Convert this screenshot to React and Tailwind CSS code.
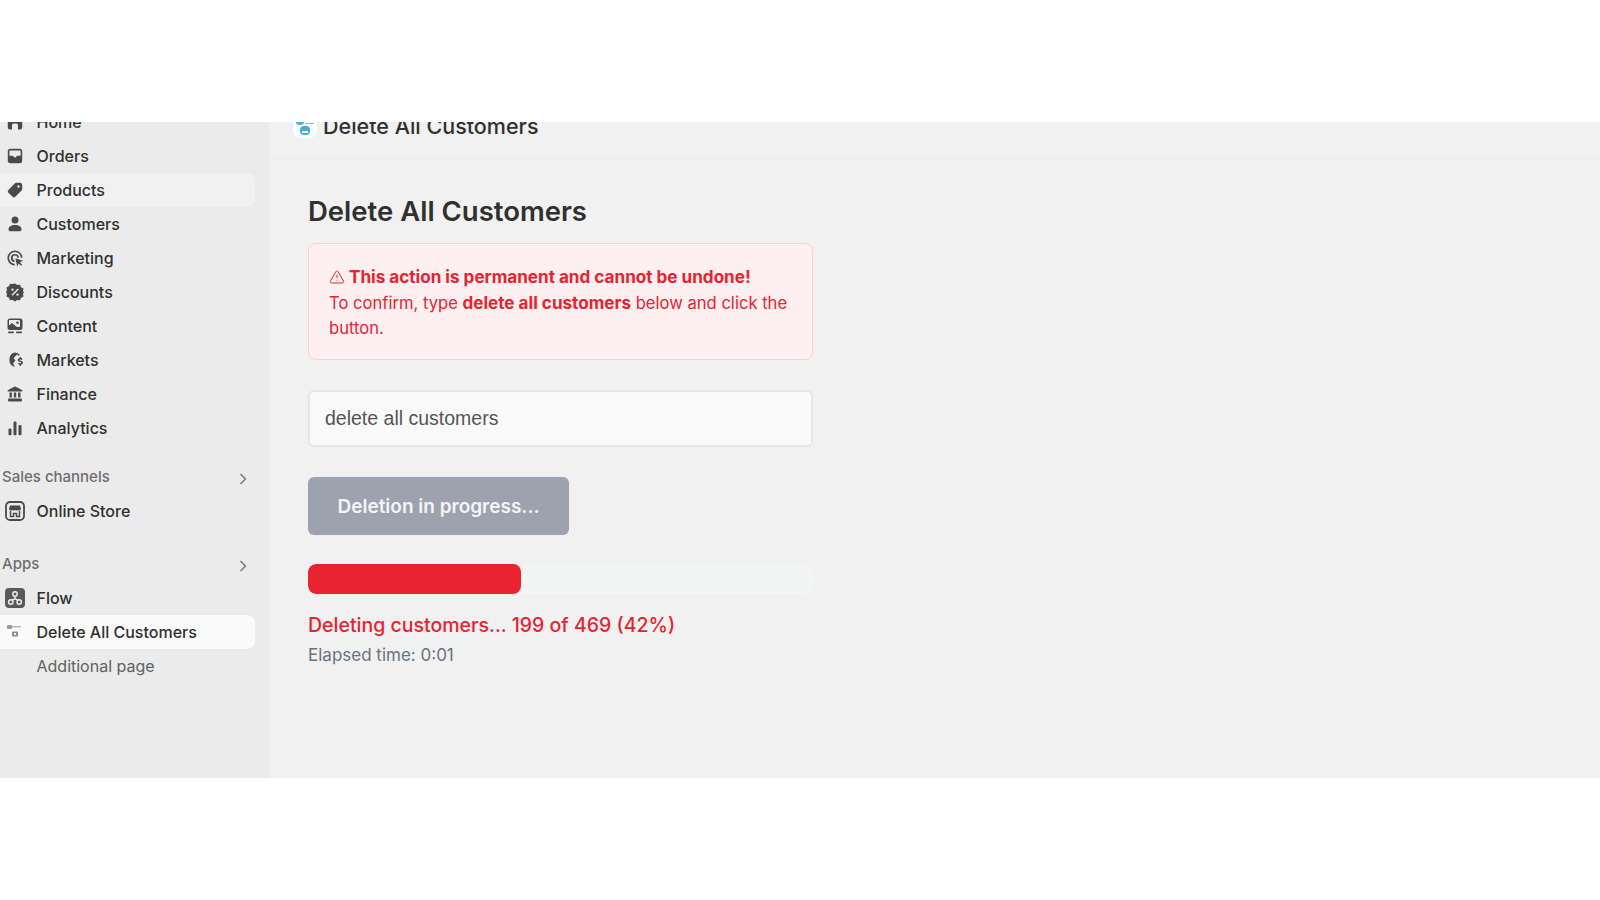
import { TriangleAlert } from 'lucide-react';

function Glyph({ children }) {
  return (
    <svg width="20" height="20" viewBox="0 0 20 20" fill="#4a4a4a" aria-hidden="true" className="shrink-0">
      {children}
    </svg>
  );
}

const HomeIcon = () => (
  <Glyph>
    <path d="M8.6 3.2a2.2 2.2 0 0 1 2.8 0l5 4a2 2 0 0 1 .8 1.600V15a2.500 2.500 0 0 1-2.500 2.500H13V13a1.500 1.500 0 0 0-1.500-1.500h-3A1.500 1.500 0 0 0 7 13v4.500H5.300A2.500 2.500 0 0 1 2.800 15V8.800a2 2 0 0 1 .8-1.600z" />
  </Glyph>
);

const OrdersIcon = () => (
  <Glyph>
    <path
      fillRule="evenodd"
      d="M5.500 2.800h9A2.700 2.700 0 0 1 17.200 5.500v9a2.700 2.700 0 0 1-2.700 2.700h-9a2.700 2.700 0 0 1-2.700-2.700v-9A2.700 2.700 0 0 1 5.500 2.800zM4.400 9.800h3.100c.5 0 .8.300 1 .7.300.7.900 1 1.500 1s1.200-.3 1.500-1c.2-.4.500-.7 1-.7h3.100V5.500c0-.6-.5-1.100-1.100-1.100h-9c-.6 0-1.100.5-1.100 1.100z"
    />
  </Glyph>
);

const ProductsIcon = () => (
  <Glyph>
    <path
      fillRule="evenodd"
      d="M11 2.800h4A2.200 2.200 0 0 1 17.200 5v4c0 .6-.2 1.100-.6 1.500l-6.300 6.300a2 2 0 0 1-2.800 0l-4.100-4.100a2 2 0 0 1 0-2.800l6.300-6.300c.4-.4.900-.8 1.300-.8zM13.500 5.300a1.200 1.200 0 1 0 0 2.400 1.200 1.200 0 0 0 0-2.400z"
    />
  </Glyph>
);

const CustomersIcon = () => (
  <Glyph>
    <circle cx="10" cy="6" r="3.500" />
    <path d="M3.500 15.500c0-2.800 2.500-4.500 6.500-4.500s6.500 1.700 6.500 4.500c0 1-.8 1.700-1.700 1.700H5.200c-.9 0-1.700-.7-1.700-1.700z" />
  </Glyph>
);

const MarketingIcon = () => (
  <Glyph>
    <path d="M10 2.500a7.500 7.500 0 0 1 7.500 7.300h-1.600A5.900 5.900 0 1 0 9.800 15.900v1.600A7.500 7.500 0 0 1 10 2.500z" />
    <path d="M10 6a4 4 0 0 1 4 3.700h-1.600A2.400 2.400 0 1 0 9.700 12.400V14A4 4 0 0 1 10 6z" />
    <path d="M10.300 10.300l7.700 2.500-3.100 1.500 2.300 2.400-1.100 1.100-2.400-2.300-1.500 3.100z" />
  </Glyph>
);

const DiscountsIcon = () => (
  <Glyph>
    <path
      fillRule="evenodd"
      d="M10 1.500l2.300 1.500 2.700-.3 1 2.500 2.500 1.300-.5 2.700L19 10l-1 1.800.5 2.700-2.500 1.300-1 2.500-2.700-.3L10 19.500 7.700 18l-2.700.3-1-2.500-2.500-1.300.5-2.700L1 10l1-1.800-.5-2.700L4 4.200l1-2.500 2.700.3zM12.800 6.500L6.500 12.800l1 1 6.300-6.300zM7.500 6.400a1.200 1.200 0 1 0 0 2.400 1.200 1.200 0 0 0 0-2.400zM12.500 11.400a1.200 1.200 0 1 0 0 2.400 1.200 1.200 0 0 0 0-2.400z"
    />
  </Glyph>
);

const ContentIcon = () => (
  <Glyph>
    <path
      fillRule="evenodd"
      d="M5 2.500h10A2.500 2.500 0 0 1 17.500 5v6.500A2.500 2.500 0 0 1 15 14H5a2.500 2.500 0 0 1-2.500-2.500V5A2.500 2.500 0 0 1 5 2.500zM4 9.500L7 7l3 2.500 2 1.500h2.500c.3 0 .5-.2.500-.5V5c0-.6-.4-1-1-1H5c-.6 0-1 .4-1 1zM12.500 5.500a1.300 1.300 0 1 0 0 2.600 1.300 1.300 0 0 0 0-2.600z"
    />
    <rect x="3" y="15.500" width="6" height="1.700" rx=".8" />
    <rect x="11" y="15.500" width="6" height="1.700" rx=".8" />
  </Glyph>
);

const MarketsIcon = () => (
  <Glyph>
    <path d="M9.500 2.500a7.500 7.500 0 0 1 5.500 2.400l-1.200 1.100A5.900 5.900 0 0 0 12 4.600L8.500 8l2 2.500-2.500 3 2 3.400a7.500 7.500 0 0 1-.5-14.400z" />
    <path d="M15.300 8c-1.500 0-2.600.9-2.600 2.100 0 1.200 1 1.700 2.300 2 .9.200 1.200.4 1.200.7 0 .3-.4.500-.9.500-.6 0-1.100-.2-1.500-.6l-1 1.100c.4.500 1 .8 1.800 1v1.200h1.400v-1.200c1.200-.2 2-1 2-2.100 0-1.200-1-1.700-2.300-2-.9-.2-1.200-.4-1.200-.7 0-.3.300-.5.800-.5s1 .2 1.300.5l1-1.100c-.4-.4-.9-.7-1.600-.8V7h-1.400v1z" />
  </Glyph>
);

const FinanceIcon = () => (
  <Glyph>
    <path d="M9.300 2.700a1.500 1.500 0 0 1 1.400 0l6.300 3.200c.7.400.5 1.600-.4 1.600H3.400c-.9 0-1.100-1.200-.4-1.600z" />
    <rect x="4.500" y="8.500" width="2.400" height="5" />
    <rect x="8.800" y="8.500" width="2.400" height="5" />
    <rect x="13.100" y="8.500" width="2.400" height="5" />
    <rect x="3" y="14.500" width="14" height="3" rx="1" />
  </Glyph>
);

const AnalyticsIcon = () => (
  <Glyph>
    <rect x="3.500" y="10.500" width="3" height="6.700" rx="1" />
    <rect x="8.500" y="3.500" width="3" height="13.700" rx="1" />
    <rect x="13.500" y="7" width="3" height="10.200" rx="1" />
  </Glyph>
);

const StoreIcon = () => (
  <svg width="20" height="20" viewBox="0 0 20 20" fill="none" aria-hidden="true" className="shrink-0">
    <rect x="1" y="1" width="18" height="18" rx="4" stroke="#4a4a4a" strokeWidth="1.800" />
    <path d="M5 4.500h10l1 3.500a2 2 0 0 1-3 1 2.500 2.500 0 0 1-3 0 2.500 2.500 0 0 1-3 0 2 2 0 0 1-3-1z" fill="#4a4a4a" />
    <path d="M5.500 10v5.500h3v-3h3v3h3V10" stroke="#4a4a4a" strokeWidth="1.500" />
  </svg>
);

const FlowIcon = () => (
  <svg width="20" height="20" viewBox="0 0 20 20" fill="none" aria-hidden="true" className="shrink-0">
    <rect width="20" height="20" rx="4" fill="#5a5a5a" />
    <g stroke="#f1f1f1" strokeWidth="1.400">
      <circle cx="10" cy="6" r="2.200" />
      <circle cx="5.800" cy="14" r="2.200" />
      <circle cx="14.200" cy="14" r="2.200" />
      <path d="M10 8.200v2.600M10 10.800l-3 1.400M10 10.800l3 1.400" />
    </g>
  </svg>
);

const AppIcon = () => (
  <svg width="20" height="20" viewBox="0 0 20 20" fill="none" aria-hidden="true" className="shrink-0">
    <rect x="2" y="3" width="5" height="4" rx="1" fill="#9a9a9a" />
    <rect x="7" y="4" width="9" height="1.500" fill="#b5b5b5" />
    <rect x="7" y="9.500" width="6" height="5" rx="1" fill="#8c8c8c" />
    <rect x="9" y="11" width="2" height="2" fill="#f5f5f5" />
  </svg>
);

const HeaderAppIcon = () => (
  <div className="flex h-7 w-[24px] shrink-0 flex-col items-center rounded-b-lg bg-white pt-[12px]">
    <div className="flex w-full items-start gap-[1px] pl-[3px]">
      <div className="h-[3px] w-[8px] rounded-b-sm bg-[#4db4d8]" />
      <div className="mt-[1px] h-[1px] w-[9px] bg-[#a8a8a8]" />
    </div>
    <div className="mt-[1px] flex h-[9px] w-[10px] items-end justify-center rounded-sm bg-[#3fb0d6] pb-[2px]">
      <div className="h-[2px] w-[6px] bg-white" />
    </div>
  </div>
);

const mainNav = [
  ['Home', HomeIcon],
  ['Orders', OrdersIcon],
  ['Products', ProductsIcon, 'bg-[#f1f1f1]'],
  ['Customers', CustomersIcon],
  ['Marketing', MarketingIcon],
  ['Discounts', DiscountsIcon],
  ['Content', ContentIcon],
  ['Markets', MarketsIcon],
  ['Finance', FinanceIcon],
  ['Analytics', AnalyticsIcon],
];

function NavRow({ label, Icon, className = '' }) {
  return (
    <div className={`flex h-[34px] w-[255px] items-center gap-3 rounded-r-lg pl-[4.5px] text-base font-medium text-[#303030] ${className}`}>
      <Icon />
      <span>{label}</span>
    </div>
  );
}

function SectionHead({ label, className = '' }) {
  return (
    <div className={`flex h-[34px] w-[255px] items-center justify-between px-[2px] text-[15px] font-medium text-[#6d6d6d] ${className}`}>
      <span className="mt-[1px]">{label}</span>
      <svg width="20" height="20" viewBox="0 0 20 20" fill="none" stroke="#7a7a7a" strokeWidth="1.500" aria-hidden="true" className="mt-[4px]">
        <path d="M7.500 5l5 5-5 5" />
      </svg>
    </div>
  );
}

export default function App() {
  return (
    <div className="h-[900px] overflow-hidden bg-white pt-[122px] font-['Inter',sans-serif]">
      <div className="flex h-[656px] overflow-hidden bg-[#f1f1f1]">
        <aside className="w-[269px] shrink-0 bg-[#ebebeb]">
          <div className="-mt-[17px]">
            {mainNav.map(([label, Icon, cls]) => (
              <NavRow key={label} label={label} Icon={Icon} className={cls} />
            ))}
            <SectionHead label="Sales channels" className="mt-[15px]" />
            <NavRow label="Online Store" Icon={StoreIcon} />
            <SectionHead label="Apps" className="mt-[19px]" />
            <NavRow label="Flow" Icon={FlowIcon} />
            <NavRow label="Delete All Customers" Icon={AppIcon} className="bg-[#fafafa]" />
            <div className="flex h-[34px] items-center pl-[36.500px] text-base text-[#616161]">
              Additional page
            </div>
          </div>
        </aside>
        <main className="min-w-0 flex-1">
          <header className="-mt-[12px] flex h-[49px] items-start gap-1.5 border-b border-[#ebebeb] pl-[24px]">
            <HeaderAppIcon />
            <h2 className="text-[21.5px] leading-[33px] font-medium text-[#303030]">Delete All Customers</h2>
          </header>
          <div className="ml-[39px] w-[505px]">
            <h1 className="mt-[34px] text-[27.5px] leading-[36px] font-semibold text-[#303030]">Delete All Customers</h1>
            <div className="mt-[14px] rounded-lg border border-[#fecdd3] bg-[#fef0f1] px-5 pt-[20px] pb-[17px] text-[16.6px] leading-[25.5px] text-[#e8232f]">
              <div className="text-[17.1px] font-bold">
                <TriangleAlert size={16} strokeWidth={1.5} className="mr-1 inline-block align-[-2px]" />
                This action is permanent and cannot be undone!
              </div>
              <div>
                To confirm, type <b className="text-[17.1px] font-bold">delete all customers</b> below and click the button.
              </div>
            </div>
            <input
              readOnly
              value="delete all customers"
              className="mt-[30px] block h-[57px] w-full rounded-md border-2 border-[#e6e6e6] bg-[#fafafa] px-[15px] font-['Liberation_Sans',sans-serif] text-[19.5px] text-[#555555] outline-none"
            />
            <button className="mt-[30px] block h-[58px] w-[261px] rounded-md bg-[#9ca3af] pt-[4px] text-[19px] font-semibold text-[#f5f5f5]">
              Deletion in progress...
            </button>
            <div className="mt-[29px] h-[30px] w-full overflow-hidden rounded-lg bg-[#f3f4f4]">
              <div className="h-full rounded-lg bg-[#e9232f]" style={{ width: '42.2%' }} />
            </div>
            <p className="mt-[15px] text-[19.5px] leading-[33px] font-medium text-[#e8232f]">
              Deleting customers... 199 of 469 (42%)
            </p>
            <p className="text-[17px] leading-[27px] text-[#6b7280]">Elapsed time: 0:01</p>
          </div>
        </main>
      </div>
    </div>
  );
}
